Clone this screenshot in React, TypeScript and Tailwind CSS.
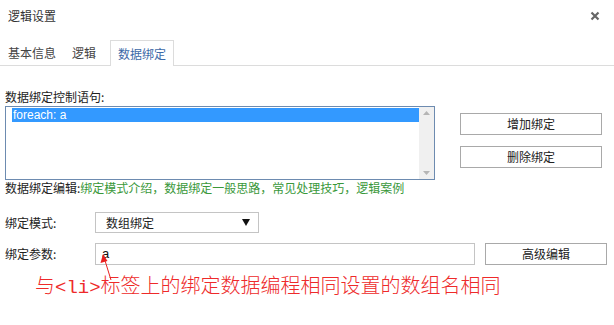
import { ReactNode } from 'react'

const cjk = '"Noto Sans CJK SC", "Liberation Sans", sans-serif'

function Btn({ children, className = '' }: { children: ReactNode; className?: string }) {
    return (
        <button className={`h-[22px] border border-[#a9a9a9] bg-white text-[12px] text-[#222] leading-none ${className}`}>
            {children}
        </button>
    )
}

export default function App() {
    return (
        <div className="relative w-[614px] h-[325px] bg-white text-[#333] overflow-hidden" style={{ fontFamily: cjk }}>
            {/* Header */}
            <div className="h-[32px] flex items-center justify-between pl-[8px] pr-[14px]">
                <span className="text-[12px]">逻辑设置</span>
                <svg width="10" height="10" viewBox="0 0 10 10">
                    <path d="M1.5 1.5 L8.5 8.5 M8.5 1.5 L1.5 8.5" stroke="#666" strokeWidth="2.2" />
                </svg>
            </div>

            {/* Tabs */}
            <div className="mt-[8px] h-[26px] flex items-end border-b border-[#dcdcdc]">
                <div className="h-[25px] px-[8px] flex items-center text-[12px] text-[#444]">基本信息</div>
                <div className="h-[25px] px-[8px] flex items-center text-[12px] text-[#444]">逻辑</div>
                <div className="ml-[6px] h-[26px] -mb-px px-[7px] flex items-center text-[12px] text-[#3d6aa8] bg-white border border-b-0 border-[#dcdcdc]">
                    数据绑定
                </div>
            </div>

            {/* Body */}
            <div className="pl-[5px] pt-[23px]">
                <div className="h-[16px] leading-[16px] text-[12px] text-[#222]">数据绑定控制语句:</div>
                <div className="mt-[1px] flex">
                    <div className="w-[430px] h-[74px] border border-[#6d8bb0] flex">
                        <div className="flex-1 pl-[6px] pt-[1px]">
                            <div
                                className="h-[14px] leading-[14px] pl-px bg-[#3399ff] text-white text-[12px]"
                                style={{ fontFamily: '"Liberation Sans", Arial, sans-serif' }}
                            >
                                foreach: a
                            </div>
                        </div>
                        <div className="w-[15px] bg-[#f0f0f0] flex flex-col justify-between items-center py-[4px]">
                            <svg width="7" height="4" viewBox="0 0 7 4">
                                <path d="M0 4 L3.5 0 L7 4 Z" fill="#b5b5b5" />
                            </svg>
                            <svg width="7" height="4" viewBox="0 0 7 4">
                                <path d="M0 0 L3.5 4 L7 0 Z" fill="#b5b5b5" />
                            </svg>
                        </div>
                    </div>
                    <div className="ml-[25px] pt-[7px] flex flex-col gap-[11px]">
                        <Btn className="w-[142px]">增加绑定</Btn>
                        <Btn className="w-[142px]">删除绑定</Btn>
                    </div>
                </div>

                <div className="h-[16px] leading-[16px] text-[12px] text-[#222]">
                    数据绑定编辑:<span className="text-[#3a983a]">绑定模式介绍，数据绑定一般思路，常见处理技巧，逻辑案例</span>
                </div>

                <div className="mt-[16px] flex items-center h-[21px]">
                    <span className="w-[90px] text-[12px] text-[#222]">绑定模式:</span>
                    <div className="w-[164px] h-[21px] border border-[#c4c4c4] flex items-center justify-between pl-[10px] pr-[8px]">
                        <span className="text-[12px] text-[#222]">数组绑定</span>
                        <svg width="8" height="7" viewBox="0 0 8 7">
                            <path d="M0 0 L8 0 L4 7 Z" fill="#111" />
                        </svg>
                    </div>
                </div>

                <div className="mt-[10px] flex items-center h-[22px]">
                    <span className="w-[90px] text-[12px] text-[#222]">绑定参数:</span>
                    <div className="w-[380px] h-[22px] border border-[#c4c4c4] flex items-center pl-[6px]">
                        <span className="text-[13px] text-[#111]" style={{ fontFamily: '"Liberation Sans", Arial, sans-serif' }}>a</span>
                    </div>
                    <Btn className="ml-[10px] w-[122px]">高级编辑</Btn>
                </div>

                <div className="mt-[8px] pl-[30px] text-[20px] leading-[24px] text-[#ee2a2a] font-light">
                    与<span className="text-[19px]" style={{ fontFamily: '"Liberation Mono", monospace' }}>&lt;li&gt;</span>标签上的绑定数据编程相同设置的数组名相同
                </div>
            </div>

            {/* annotation arrow */}
            <svg className="absolute left-[98px] top-[253px]" width="18" height="28" viewBox="0 0 18 28">
                <path d="M13 27 L6.5 6" stroke="#e82020" strokeWidth="1" fill="none" />
                <path d="M5 1 L2.5 10 L9.5 8 Z" fill="#e82020" />
            </svg>
        </div>
    )
}
